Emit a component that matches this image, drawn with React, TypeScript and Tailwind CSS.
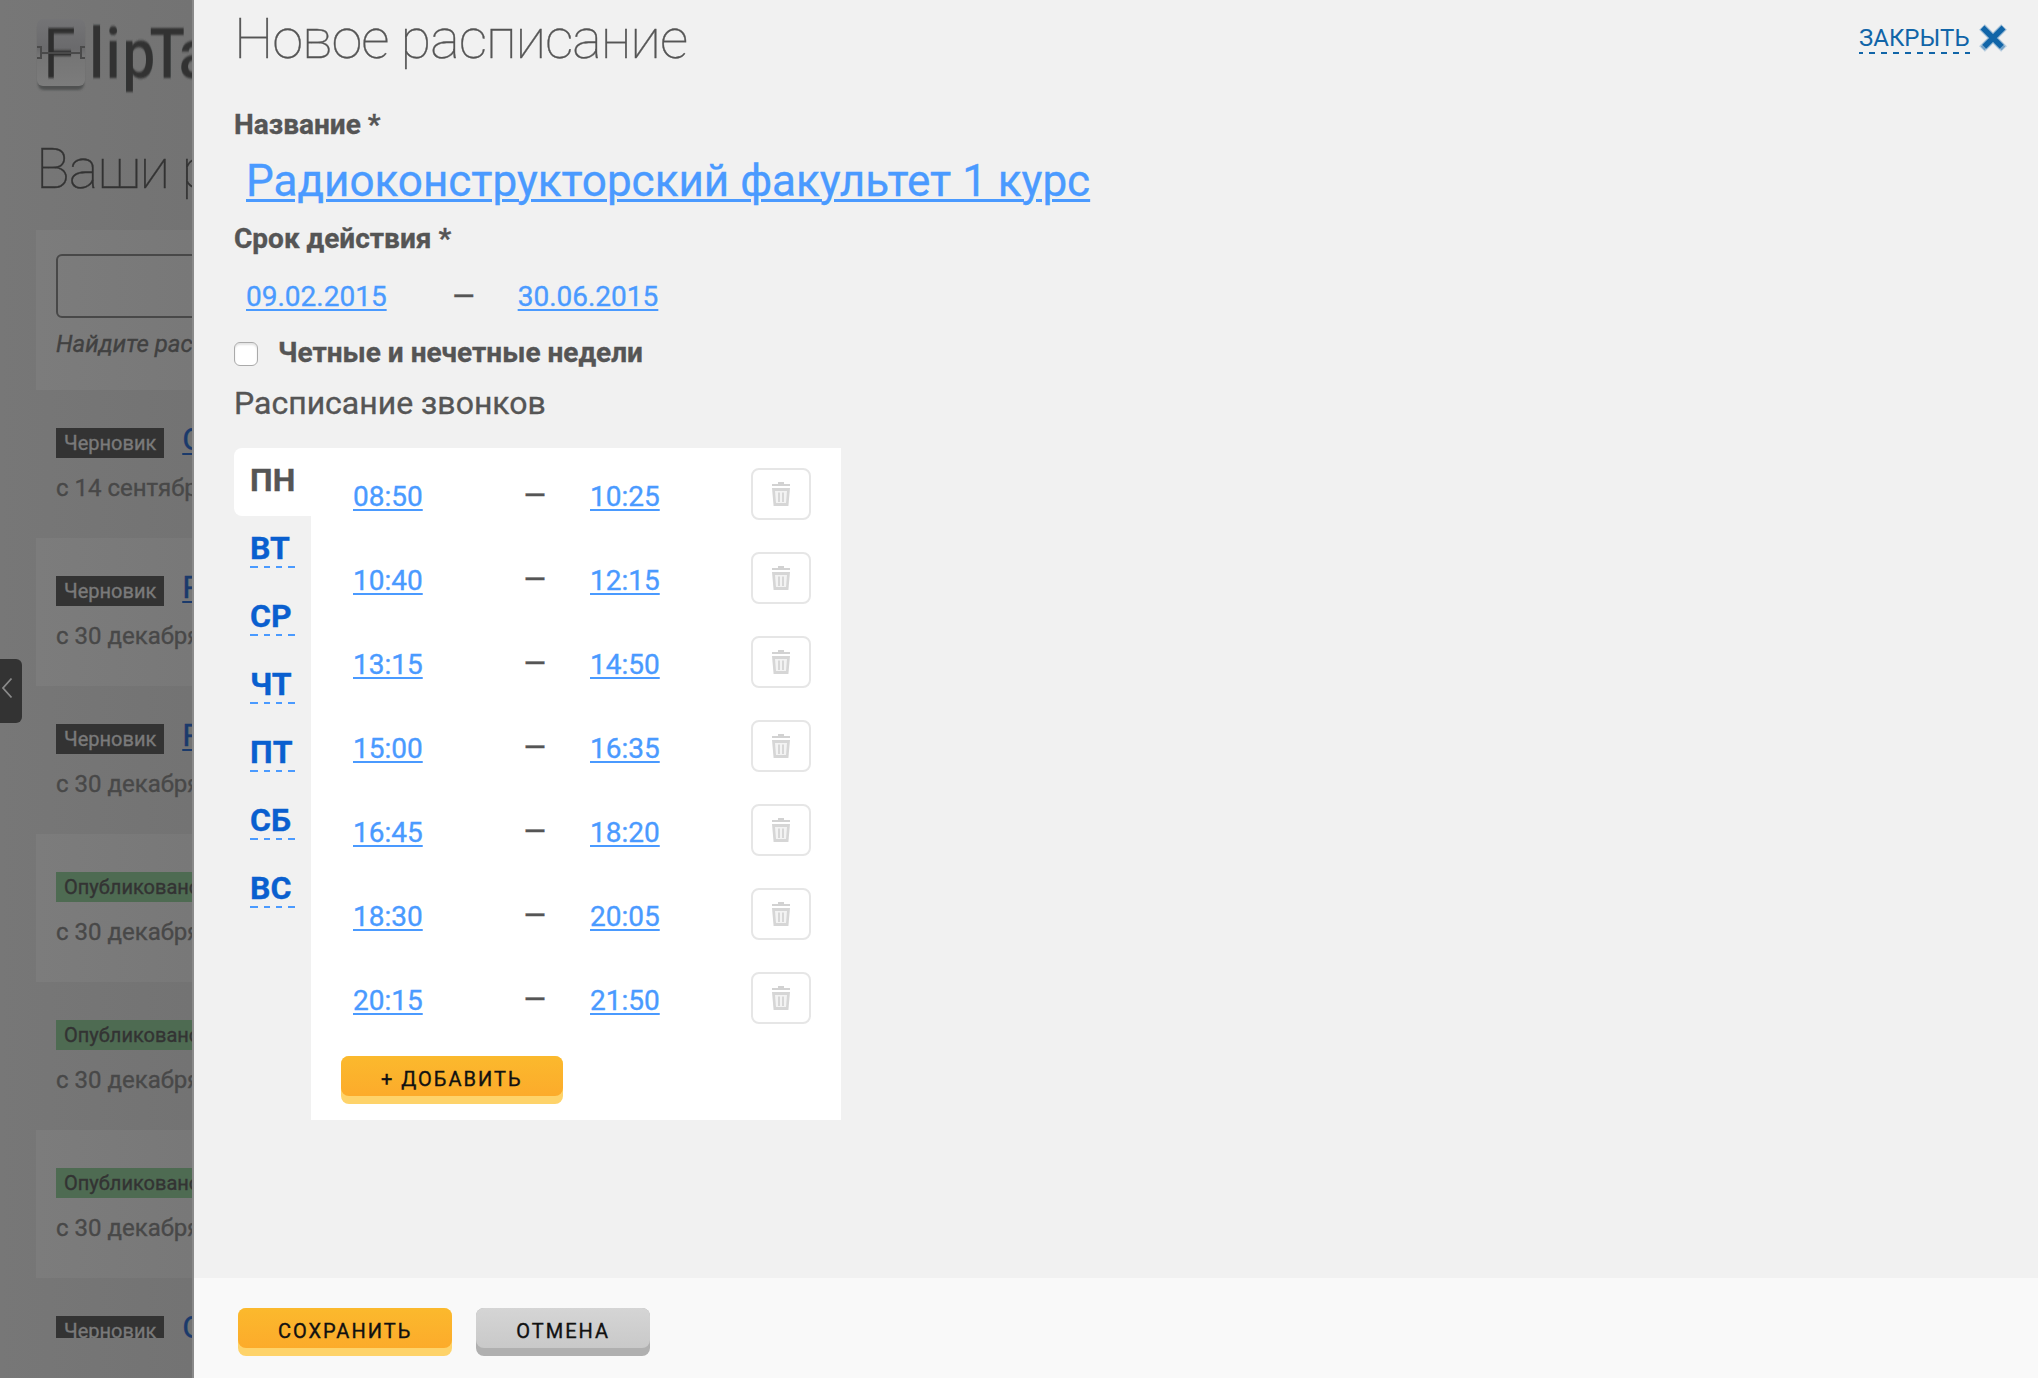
import React from "react";

type Entry = { status: "draft" | "published"; title: string; date: string };

const entries: Entry[] = [
  { status: "draft", title: "О", date: "с 14 сентября" },
  { status: "draft", title: "Р", date: "с 30 декабря" },
  { status: "draft", title: "Р", date: "с 30 декабря" },
  { status: "published", title: "", date: "с 30 декабря" },
  { status: "published", title: "", date: "с 30 декабря" },
  { status: "published", title: "", date: "с 30 декабря" },
  { status: "draft", title: "О", date: "с 30 декабря" },
];

const days = ["ПН", "ВТ", "СР", "ЧТ", "ПТ", "СБ", "ВС"];

const bells: [string, string][] = [
  ["08:50", "10:25"],
  ["10:40", "12:15"],
  ["13:15", "14:50"],
  ["15:00", "16:35"],
  ["16:45", "18:20"],
  ["18:30", "20:05"],
  ["20:15", "21:50"],
];

function Logo() {
  return (
    <svg width="192" height="78" viewBox="0 0 192 78" className="block shrink-0">
      <defs>
        <linearGradient id="tile" x1="0" y1="0" x2="0" y2="1">
          <stop offset="0" stopColor="#747476" />
          <stop offset="0.45" stopColor="#6a6a6c" />
          <stop offset="0.55" stopColor="#757575" />
          <stop offset="1" stopColor="#7c7c7c" />
        </linearGradient>
        <filter id="soft" x="-10%" y="-10%" width="120%" height="120%">
          <feGaussianBlur stdDeviation="0.8" />
        </filter>
      </defs>
      <rect x="38" y="8" width="46" height="66" rx="6" fill="#3f4343" opacity="0.7" filter="url(#soft)" />
      <rect x="37" y="3" width="48" height="67" rx="6" fill="url(#tile)" />
      <g fontFamily="Roboto, sans-serif" fontSize="70" filter="url(#soft)" transform="scale(0.83 1)">
        <text x="52.500" y="62" fill="#2e2e2e" fontWeight="400">F</text>
        <text x="107.500 127.500 147.500 180 215.500" y="62" fill="#313333" fontWeight="500">lipTa</text>
      </g>
      <path d="M37 31h4v11h-4M85 31h-4v11h4M41 37h40" fill="none" stroke="#4a4a4a" strokeWidth="2" />
    </svg>
  );
}

function Trash() {
  return (
    <svg width="18" height="24" viewBox="0 0 18 24" fill="none">
      <path d="M6 0h6v2h6v2H0V2h6z" fill="#d2d2d2" />
      <path d="M0 6h18l-1.600 18H1.600z" fill="#d6d6d6" />
      <path d="M3 9h12l-1 12H4z" fill="#f3f3f3" />
      <path d="M7 10.500v9.500M11 10.500v9.500" stroke="#d4d4d4" strokeWidth="1.800" />
    </svg>
  );
}

function Dashes({ width, color, pattern, offset = 0 }: { width: number; color: string; pattern: string; offset?: number }) {
  return (
    <svg width={width} height="2" viewBox={`0 0 ${width} 2`} className="block">
      <path d={`M0 1H${width}`} stroke={color} strokeWidth="2" strokeDasharray={pattern} strokeDashoffset={offset} />
    </svg>
  );
}

function Button({ children, gray = false }: { children: React.ReactNode; gray?: boolean }) {
  return (
    <button
      className={
        gray
          ? "flex h-12 items-start rounded-lg bg-[#b0b0b0] text-xl text-[#111]"
          : "flex h-12 items-start rounded-lg bg-[#fed36a] text-xl text-[#111]"
      }
    >
      <span
        className={
          gray
            ? "block h-10 rounded-lg bg-linear-to-b from-[#d5d5d5] to-[#c9c9c9] px-10 leading-[46px] tracking-[2px]"
            : "block h-10 rounded-lg bg-linear-to-b from-[#fbb92d] to-[#fcab2b] px-10 leading-[46px] tracking-[2px]"
        }
      >
        {children}
      </span>
    </button>
  );
}

function Sidebar() {
  return (
    <aside className="relative h-full w-[194px] shrink-0 overflow-hidden border-r-2 border-[#8a8a8a] bg-linear-to-r from-[#777] to-[#737373]">
      <div className="flex h-[1338px] flex-col overflow-hidden whitespace-nowrap">
        <div className="pt-4">
          <Logo />
        </div>
        <div className="ml-9 mt-[36px] h-[100px] shrink-0 text-[56px] font-thin leading-[78px] tracking-[-1.1px] text-[#333]">
          Ваши расписания
        </div>
        <div className="ml-9 h-40 shrink-0 bg-linear-to-r from-[#7c7c7c] to-[#787878] pl-5 pt-6">
          <div className="h-16 w-[400px] rounded-md border-2 border-[#484848]" />
          <div className="pt-2 text-2xl italic leading-9 text-[#414141]">Найдите расписание</div>
        </div>
        {entries.map((e, i) => (
          <div
            key={i}
            className={
              i % 2
                ? "ml-9 h-[148px] shrink-0 bg-linear-to-r from-[#7c7c7c] to-[#787878] pl-5"
                : "ml-9 h-[148px] shrink-0 pl-5"
            }
          >
            <div className="flex h-[69px] pt-[29px]">
              <span
                className={
                  e.status === "draft"
                    ? "mt-[9px] h-[30px] bg-[#333] px-2 text-xl leading-[30px] text-[#7a7a7a]"
                    : "mt-[9px] h-[30px] bg-[#4e6b52] px-2 text-xl leading-[30px] text-[#333]"
                }
              >
                {e.status === "draft" ? "Черновик" : "Опубликовано"}
              </span>
              <a className="ml-[18px] text-[32px] leading-10 text-[#1b3a6b] underline decoration-2 underline-offset-[3px]">
                {e.title}
              </a>
            </div>
            <div className="mt-[11px] text-2xl leading-9 text-[#484848]">{e.date}</div>
          </div>
        ))}
      </div>
      <div className="absolute left-0 top-[659px] flex h-16 w-[22px] items-center rounded-r-md bg-[#333]">
        <svg width="14" height="22" viewBox="0 0 14 22" fill="none" className="-mt-1.5">
          <path d="M11.500 1.500L3 11l8.500 9.500" stroke="#8a8a8a" strokeWidth="1.800" />
        </svg>
      </div>
    </aside>
  );
}

const link = "text-[28px] leading-9 text-[#4a9aff] underline decoration-[1.5px] underline-offset-[3px]";

export default function App() {
  return (
    <div className="flex h-[1378px] w-[2038px] overflow-hidden bg-[#f1f1f1] font-['Roboto',sans-serif] text-[#555] [-webkit-text-stroke:0.35px]">
      <Sidebar />
      <main className="flex min-w-0 flex-1 flex-col">
        <div className="flex-1 pl-10">
          <header className="flex h-[78px] justify-between pr-[31px]">
            <h1 className="text-[56px] font-thin leading-[78px] tracking-[-1.1px]">Новое расписание</h1>
            <div className="flex items-start gap-[9px] pt-6 text-[#1165a8]">
              <div className="flex h-[30px] w-[111px] flex-col justify-between whitespace-nowrap text-2xl leading-7 [-webkit-text-stroke:0]">
                <span>ЗАКРЫТЬ</span>
                <Dashes width={111} color="#1165a8" pattern="6 6" offset={2} />
              </div>
              <svg width="28" height="28" viewBox="0 0 28 28" fill="none">
                <path d="M3 3l22 22M25 3L3 25" stroke="#1165a8" strokeOpacity="0.35" strokeWidth="8" />
                <path d="M3.500 3.500l21 21M24.500 3.500l-21 21" stroke="#1165a8" strokeWidth="5.500" />
                <path d="M1 22l5 5M27 22l-5 5" stroke="#f1f1f1" strokeOpacity="0.45" strokeWidth="5" />
              </svg>
            </div>
          </header>
          <div className="mt-[29px] text-[28px] font-bold leading-9">Название *</div>
          <div className="mt-3 pl-3 text-[44px] leading-[52px] text-[#4a9aff]">
            <a className="underline decoration-[3px] underline-offset-[3px]">Радиоконструкторский факультет 1 курс</a>
          </div>
          <div className="mt-3.5 text-[28px] font-bold leading-9">Срок действия *</div>
          <div className="mt-[22px] flex pl-3 text-[28px] leading-9">
            <a className={link}>09.02.2015</a>
            <span className="ml-[66px] w-[65px] font-medium">—</span>
            <a className={link}>30.06.2015</a>
          </div>
          <label className="mt-5 flex">
            <span className="mt-[7px] size-6 rounded-md border border-[#aaa] bg-white shadow-[inset_0_2px_2px_#e4e4e4]" />
            <span className="ml-5 text-[28px] font-bold leading-9">Четные и нечетные недели</span>
          </label>
          <h2 className="mt-3 text-[32px] leading-10">Расписание звонков</h2>
          <section className="mt-[25px] flex">
            <nav className="w-[77px]">
              {days.map((d, i) => (
                <div
                  key={d}
                  className={
                    i === 0
                      ? "h-[68px] rounded-l-lg bg-white px-4 pt-3 text-[32px] font-bold leading-10"
                      : "h-[68px] px-4 pt-3 text-[32px] font-bold leading-10 text-[#0a5fcf]"
                  }
                >
                  <div className="h-[38px]">{d}</div>
                  {i > 0 && <Dashes width={45} color="#4a9aff" pattern="8 6 6 6 6 6 7 6" />}
                </div>
              ))}
            </nav>
            <div className="h-[672px] w-[530px] bg-white pl-[30px]">
              {bells.map(([from, to]) => (
                <div key={from} className="flex h-[84px] pl-3 pt-[31px] text-[28px] leading-9">
                  <a className={`${link} w-[171px]`}>{from}</a>
                  <span className="-mt-px w-[66px] font-medium">—</span>
                  <a className={`${link} w-[161px]`}>{to}</a>
                  <button className="-mt-[11px] flex h-[52px] w-[60px] items-center justify-center rounded-lg border-2 border-[#e6e6e6]">
                    <Trash />
                  </button>
                </div>
              ))}
              <div className="pt-5">
                <Button>+ ДОБАВИТЬ</Button>
              </div>
            </div>
          </section>
        </div>
        <footer className="flex h-[100px] shrink-0 items-start gap-6 bg-[#f9f9f9] pl-11 pt-[30px]">
          <Button>СОХРАНИТЬ</Button>
          <Button gray>ОТМЕНА</Button>
        </footer>
      </main>
    </div>
  );
}
